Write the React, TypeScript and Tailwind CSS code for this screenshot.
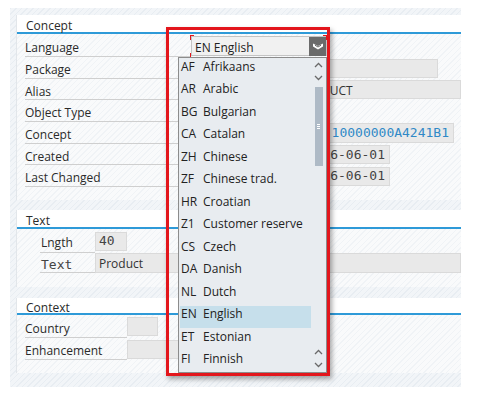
import React from 'react';

const LANGS: [string, string][] = [
  ['AF', 'Afrikaans'],
  ['AR', 'Arabic'],
  ['BG', 'Bulgarian'],
  ['CA', 'Catalan'],
  ['ZH', 'Chinese'],
  ['ZF', 'Chinese trad.'],
  ['HR', 'Croatian'],
  ['Z1', 'Customer reserve'],
  ['CS', 'Czech'],
  ['DA', 'Danish'],
  ['NL', 'Dutch'],
  ['EN', 'English'],
  ['ET', 'Estonian'],
  ['FI', 'Finnish'],
];

const hatch = 'bg-[repeating-linear-gradient(135deg,#e8edf2_0px,#e8edf2_1px,#f2f5f8_1px,#f2f5f8_4px)]';
const hatchLight = 'bg-[repeating-linear-gradient(135deg,#f0f3f6_0px,#f0f3f6_1px,#f9fafb_1px,#f9fafb_4px)]';
const mono = "font-['DejaVu_Sans_Mono',monospace] text-[13px]";

function GroupHeader({ title, h }: { title: string; h: string }) {
  return (
    <div className={`${h} bg-white border-b-2 border-[#2e9ad8] pl-[9px] pt-[4px] flex items-center text-[12px] text-[#2a2a2a]`}>
      {title}
    </div>
  );
}

function Field({ className, children }: { className: string; children?: React.ReactNode }) {
  return (
    <div className={`bg-[#e9e9e9] border border-[#dadada] flex items-center overflow-hidden whitespace-nowrap ${className}`}>
      {children}
    </div>
  );
}

function Row({ label, h, labelW, children, labelClass }: { label: string; h: string; labelW: string; children?: React.ReactNode; labelClass?: string }) {
  return (
    <div className={`flex ${h}`}>
      <div className={`${labelW} shrink-0 border-b border-[#cfcfcf] pt-[5px] flex items-center text-[12px] text-[#2a2a2a] ${labelClass ?? ''}`}>
        {label}
      </div>
      <div className="flex-1 flex items-center">{children}</div>
    </div>
  );
}

function Chev({ up }: { up?: boolean }) {
  return (
    <svg width="9" height="6" viewBox="0 0 9 6" className="block">
      <path d={up ? 'M1 5 L4.5 1.5 L8 5' : 'M1 1 L4.5 4.5 L8 1'} fill="none" stroke="#6a6a6a" strokeWidth="1.3" />
    </svg>
  );
}

function Corner({ className }: { className: string }) {
  return <div className={`absolute w-[4px] h-[5px] border-[#e3161c] ${className}`} />;
}

function Dropdown() {
  return (
    <div className="absolute left-[166px] top-[27px] w-[164px] h-[349px] border-[3px] border-[#e3161c] shadow-[2px_3px_5px_rgba(0,0,0,0.35)]">
      <div className="relative w-full h-full">
        {/* combo box */}
        <div className="absolute left-[22px] top-[6px] w-[136px] h-[20px] bg-[#f1f1f1] border border-[#c4c4c4] flex items-center">
          <span className="pl-[3px] pt-[3px] text-[12px] text-[#222] flex-1">EN English</span>
          <div className="w-[17px] h-[19px] bg-[#6b6b6b] flex items-center justify-center">
            <svg width="12" height="9" viewBox="0 0 12 9">
              <path d="M1 1.5 L6 4 L11 1.5 L11 4.5 L6 7.5 L1 4.5 Z" fill="#fff" />
              <path d="M3 3.2 L6 5 L9 3.2" fill="none" stroke="#6b6b6b" strokeWidth="1" />
            </svg>
          </div>
        </div>
        <Corner className="left-[21px] top-[5px] border-l border-t" />
        <Corner className="left-[21px] top-[23px] border-l border-b" />
        <Corner className="left-[154px] top-[5px] border-r border-t" />
        {/* list */}
        <div className="absolute left-[9px] top-[27px] w-[149px] h-[316px] bg-[#e8ecf0] border border-[#8c8c8c] flex">
          <div className="flex-1 flex flex-col pl-[1px]">
            {LANGS.map(([code, name]) => (
              <div
                key={code}
                className={`h-[22.5px] shrink-0 flex items-center pb-[5px] text-[12px] text-[#222] ${code === 'EN' ? 'bg-[#c6dfeb]' : ''}`}
              >
                <span className="w-[23px] pl-[1px]">{code}</span>
                <span>{name}</span>
              </div>
            ))}
          </div>
          <div className="w-[15px] flex flex-col items-center">
            <div className="mt-[4px]"><Chev up /></div>
            <div className="mt-[7px]"><Chev /></div>
            <div className="mt-[6px] w-[8px] h-[79px] bg-[#aebac6] flex flex-col items-center justify-center gap-[1px]">
              <div className="w-[3px] h-[1px] bg-white" />
              <div className="w-[3px] h-[1px] bg-white" />
              <div className="w-[3px] h-[1px] bg-white" />
            </div>
            <div className="flex-1" />
            <div><Chev up /></div>
            <div className="mt-[7px] mb-[4px]"><Chev /></div>
          </div>
        </div>
      </div>
    </div>
  );
}

export default function App() {
  return (
    <div className="relative w-[492px] h-[403px] bg-white font-['Open_Sans','Noto_Sans',sans-serif] overflow-hidden">
      <div className="pt-[8px] pl-[10px]">
        <div className={`w-[451px] h-[379px] ${hatch} pl-[6px] pt-[7px] flex flex-col`}>
          {/* Concept */}
          <div className={`h-[185px] ${hatchLight} border-l border-[#e2e6ea]`}>
            <GroupHeader title="Concept" h="h-[19px]" />
            <div className="pl-[8px]">
              <Row label="Language" h="h-[23px]" labelW="w-[165px]" />
              <Row label="Package" h="h-[22px]" labelW="w-[165px]">
                <Field className="w-[248px] h-[19px]" />
              </Row>
              <Row label="Alias" h="h-[21px]" labelW="w-[165px]">
                <Field className="ml-[103px] flex-1 h-[19px] pl-[3px] pt-[2px] text-[12px] text-[#333]">PRODUCT</Field>
              </Row>
              <Row label="Object Type" h="h-[22px]" labelW="w-[165px]" />
              <Row label="Concept" h="h-[22px]" labelW="w-[165px]">
                <Field className={`w-[264px] h-[20px] justify-end pr-[4px] ${mono} text-[#3089c7]`}>10000000A4241B1</Field>
              </Row>
              <Row label="Created" h="h-[21px]" labelW="w-[165px]">
                <Field className={`w-[200px] h-[19px] justify-end pr-[4px] ${mono} text-[#444]`}>2016-06-01</Field>
              </Row>
              <Row label="Last Changed" h="h-[22px]" labelW="w-[165px]">
                <Field className={`w-[200px] h-[19px] justify-end pr-[4px] ${mono} text-[#444]`}>2016-06-01</Field>
              </Row>
            </div>
          </div>

          {/* Text */}
          <div className={`mt-[10px] h-[77px] ${hatchLight} border-l border-[#e2e6ea]`}>
            <GroupHeader title="Text" h="h-[19px]" />
            <div className="pl-[23px]">
              <Row label="Lngth" h="h-[24px]" labelW="w-[55px]" labelClass="pl-[1px]">
                <Field className={`w-[32px] h-[19px] pl-[3px] ${mono} text-[#444]`}>40</Field>
              </Row>
              <Row label="Text" h="h-[20px]" labelW="w-[55px]" labelClass={`pl-[1px] ${mono} text-[#444]`}>
                <Field className="flex-1 h-[20px] pl-[3px] pt-[1px] text-[12px] text-[#333]">Product</Field>
              </Row>
            </div>
          </div>

          {/* Context */}
          <div className={`mt-[11px] h-[75px] ${hatchLight} border-l border-[#e2e6ea]`}>
            <GroupHeader title="Context" h="h-[17px]" />
            <div className="pl-[8px]">
              <Row label="Country" h="h-[23px]" labelW="w-[102px]">
                <Field className="w-[31px] h-[19px]" />
              </Row>
              <Row label="Enhancement" h="h-[22px]" labelW="w-[102px]">
                <Field className="w-[120px] h-[19px]" />
              </Row>
            </div>
          </div>
        </div>
      </div>
      <Dropdown />
    </div>
  );
}
